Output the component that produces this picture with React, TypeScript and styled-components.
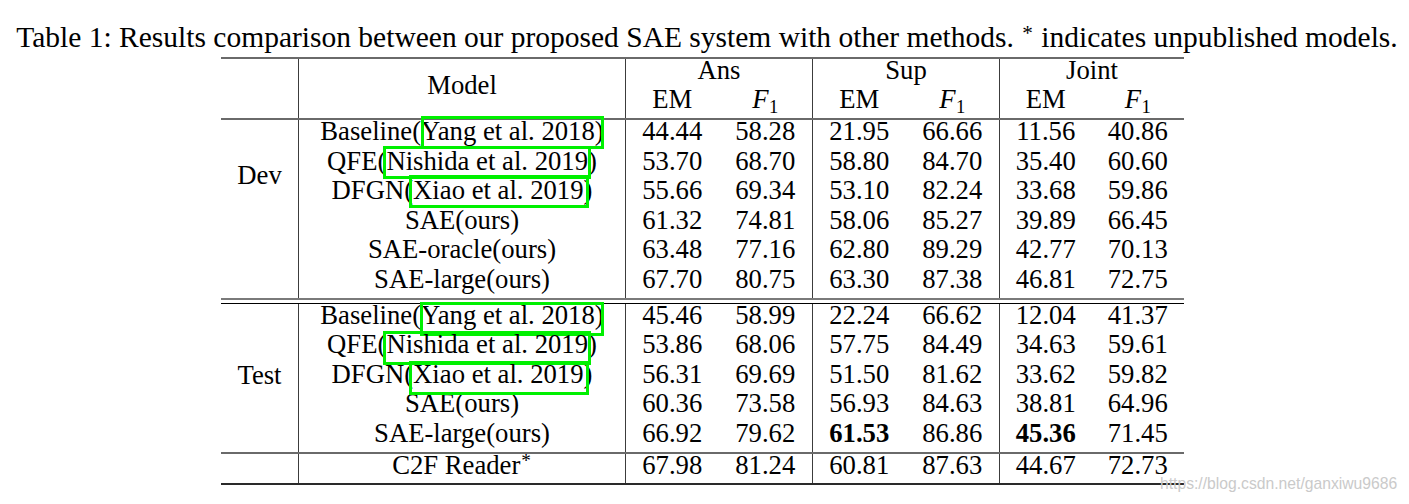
import React from "react";
import styled, { createGlobalStyle } from "styled-components";

const Global = createGlobalStyle`
  html, body { margin: 0; padding: 0; background: #ffffff; }
  body { font-family: "Liberation Serif", "Times New Roman", serif; color: #000; }
`;

const COLS = "77px 327px 93.5px 93.5px 93.5px 93.5px 92.5px 92.5px";
const ROW = 29.6;

const Page = styled.div`
  position: relative;
  width: 1409px;
  height: 504px;
  overflow: hidden;
  display: flex;
  flex-direction: column;
  align-items: center;
  background: #fff;
`;

const Caption = styled.div`
  margin-top: 22px;
  margin-left: 5px;
  font-size: 29.5px;
  line-height: 30px;
  white-space: nowrap;
`;

const Star = styled.span`
  font-size: 0.72em;
  line-height: 0;
  vertical-align: 0.32em;
  margin: 0 0.05em;
`;

const Table = styled.div`
  width: 963px;
  margin-top: 5px;
  margin-right: 4px;
  display: flex;
  flex-direction: column;
  font-size: 26.7px;
`;

const Rule = styled.div<{ $h: number; $c: string }>`
  height: ${(p) => p.$h}px;
  background: ${(p) => p.$c};
`;

const Gap = styled.div<{ $h: number }>`
  height: ${(p) => p.$h}px;
`;

const Grid = styled.div<{ $rows: number; $row?: number }>`
  display: grid;
  grid-template-columns: ${COLS};
  grid-template-rows: repeat(${(p) => p.$rows}, ${(p) => p.$row ?? ROW}px);
`;

const Cell = styled.div<{ $col: number; $span?: number; $row?: number; $rspan?: number; $line?: boolean; $bold?: boolean }>`
  grid-column: ${(p) => p.$col} / span ${(p) => p.$span ?? 1};
  grid-row: ${(p) => (p.$row ? `${p.$row} / span ${p.$rspan ?? 1}` : "auto")};
  border-left: ${(p) => (p.$line ? "1px solid #3c3c3c" : "none")};
  display: flex;
  align-items: center;
  justify-content: center;
  white-space: nowrap;
  font-weight: ${(p) => (p.$bold ? 700 : 400)};
`;

const Txt = styled.span<{ $lift?: number }>`
  display: block;
  line-height: 23.4px;
  padding-bottom: ${(p) => 6.2 + (p.$lift ?? 0)}px;
`;

const Italic = styled.i`
  font-style: italic;
`;

const Sub = styled.sub`
  font-size: 0.7em;
  line-height: 0;
  vertical-align: -0.22em;
  margin-left: 0.02em;
`;

const Cite = styled.span`
  position: relative;
`;

const Box = styled.span<{ $t: number; $b: number; $l: number; $r: number }>`
  position: absolute;
  top: ${(p) => p.$t}px;
  bottom: ${(p) => p.$b}px;
  left: ${(p) => p.$l}px;
  right: ${(p) => p.$r}px;
  border: 3px solid #00f000;
  pointer-events: none;
`;

const Watermark = styled.div`
  position: absolute;
  left: 1160px;
  top: 475px;
  font-family: "Liberation Sans", Arial, sans-serif;
  font-size: 15.7px;
  line-height: 18px;
  color: #cacaca;
  white-space: nowrap;
`;

const F1 = () => (
  <>
    <Italic>F</Italic>
    <Sub>1</Sub>
  </>
);

type BoxSpec = { t: number; b: number; l: number; r: number };
type RowData = {
  name: string;
  cite?: string;
  box?: BoxSpec;
  vals: string[];
  bold?: number[];
  star?: boolean;
};

const devBox = (l: number, r: number): BoxSpec => ({ t: 0, b: -3, l, r });
const testBox = (l: number, r: number): BoxSpec => ({ t: 2, b: -6, l, r });

const dev: RowData[] = [
  { name: "Baseline", cite: "Yang et al. 2018", box: devBox(0, -9), vals: ["44.44", "58.28", "21.95", "66.66", "11.56", "40.86"] },
  { name: "QFE", cite: "Nishida et al. 2019", box: devBox(-3, -3), vals: ["53.70", "68.70", "58.80", "84.70", "35.40", "60.60"] },
  { name: "DFGN", cite: "Xiao et al. 2019", box: devBox(-4, -5), vals: ["55.66", "69.34", "53.10", "82.24", "33.68", "59.86"] },
  { name: "SAE(ours)", vals: ["61.32", "74.81", "58.06", "85.27", "39.89", "66.45"] },
  { name: "SAE-oracle(ours)", vals: ["63.48", "77.16", "62.80", "89.29", "42.77", "70.13"] },
  { name: "SAE-large(ours)", vals: ["67.70", "80.75", "63.30", "87.38", "46.81", "72.75"] },
];

const test: RowData[] = [
  { name: "Baseline", cite: "Yang et al. 2018", box: testBox(-1, -9), vals: ["45.46", "58.99", "22.24", "66.62", "12.04", "41.37"] },
  { name: "QFE", cite: "Nishida et al. 2019", box: testBox(-3, -3), vals: ["53.86", "68.06", "57.75", "84.49", "34.63", "59.61"] },
  { name: "DFGN", cite: "Xiao et al. 2019", box: testBox(-4, -5), vals: ["56.31", "69.69", "51.50", "81.62", "33.62", "59.82"] },
  { name: "SAE(ours)", vals: ["60.36", "73.58", "56.93", "84.63", "38.81", "64.96"] },
  { name: "SAE-large(ours)", vals: ["66.92", "79.62", "61.53", "86.86", "45.36", "71.45"], bold: [2, 4] },
];

const c2f: RowData[] = [
  { name: "C2F Reader", star: true, vals: ["67.98", "81.24", "60.81", "87.63", "44.67", "72.73"] },
];

const ModelName = ({ r }: { r: RowData }) => (
  <Txt>
    {r.cite ? (
      <>
        {r.name}(
        <Cite>
          {r.cite}
          {r.box && <Box $t={r.box.t} $b={r.box.b} $l={r.box.l} $r={r.box.r} />}
        </Cite>
        )
      </>
    ) : (
      r.name
    )}
    {r.star && <Star>*</Star>}
  </Txt>
);

const Section = ({ rows, label, span, lift }: { rows: RowData[]; label?: string; span?: number; lift?: number }) => (
  <Grid $rows={rows.length}>
    {label && (
      <Cell $col={1} $row={1} $rspan={span}>
        <Txt $lift={lift}>{label}</Txt>
      </Cell>
    )}
    {rows.map((r, i) => (
      <React.Fragment key={i}>
        <Cell $col={2} $row={i + 1} $line>
          <ModelName r={r} />
        </Cell>
        {r.vals.map((v, j) => (
          <Cell
            key={j}
            $col={3 + j}
            $row={i + 1}
            $line={j % 2 === 0}
            $bold={r.bold?.includes(j)}
          >
            <Txt>{v}</Txt>
          </Cell>
        ))}
      </React.Fragment>
    ))}
  </Grid>
);

const groups = ["Ans", "Sup", "Joint"];

const Header = () => (
  <Grid $rows={2} $row={29.5}>
    <Cell $col={2} $row={1} $rspan={2} $line>
      <Txt $lift={0}>Model</Txt>
    </Cell>
    {groups.map((g, i) => (
      <Cell key={g} $col={3 + i * 2} $span={2} $row={1} $line>
        <Txt>{g}</Txt>
      </Cell>
    ))}
    {groups.map((g, i) => (
      <React.Fragment key={g + "s"}>
        <Cell $col={3 + i * 2} $row={2} $line>
          <Txt>EM</Txt>
        </Cell>
        <Cell $col={4 + i * 2} $row={2}>
          <Txt>
            <F1 />
          </Txt>
        </Cell>
      </React.Fragment>
    ))}
  </Grid>
);

export default function App() {
  return (
    <>
      <Global />
      <Page>
        <Caption>
          Table 1: Results comparison between our proposed SAE system with other methods. <Star>*</Star> indicates
          unpublished models.
        </Caption>
        <Table>
          <Rule $h={2} $c="#6a6a6a" />
          <Header />
          <Rule $h={2} $c="#6a6a6a" />
          <Section rows={dev} label="Dev" span={4} />
          <Rule $h={2} $c="#7a7a7a" />
          <Gap $h={3} />
          <Rule $h={1} $c="#000" />
          <Section rows={test} label="Test" span={5} lift={-3} />
          <Rule $h={2} $c="#6a6a6a" />
          <Section rows={c2f} />
          <Rule $h={2} $c="#2a2a2a" />
        </Table>
        <Watermark>https://blog.csdn.net/ganxiwu9686</Watermark>
      </Page>
    </>
  );
}
